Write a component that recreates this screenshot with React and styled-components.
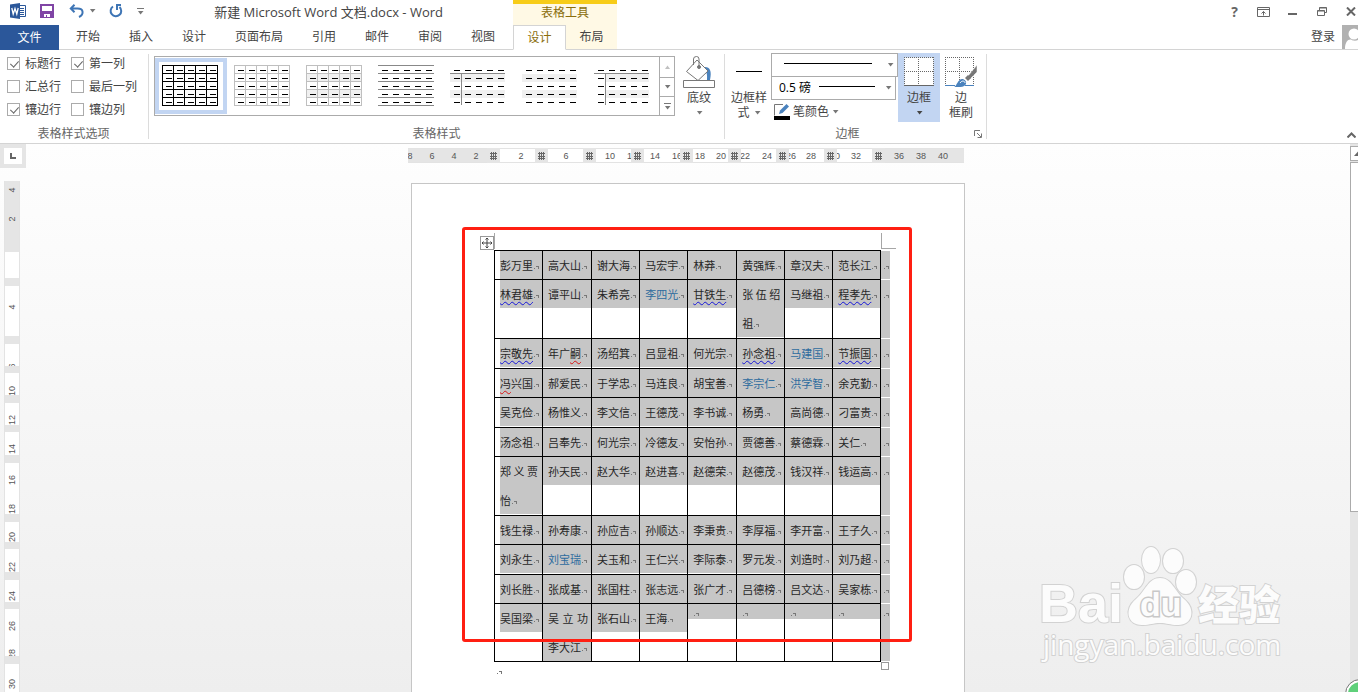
import React from "react";
import styled, { createGlobalStyle, css } from "styled-components";

// styles
const GlobalStyle = createGlobalStyle`
	* {
		box-sizing: border-box;
	}
	body {
		margin: 0;
		overflow: hidden;
		color: #444;
		font: 12px/16px "Open Sans", "Noto Sans CJK SC", sans-serif;
	}
	button, select, input {
		margin: 0;
		padding: 0;
		border: 0;
		background: none;
		color: inherit;
		font: inherit;
	}
	svg {
		display: block;
		flex: none;
	}
`;

const Container = styled.div`
	display: flex;
	flex-direction: column;
	height: 100vh;
	position: relative;
	overflow: hidden;
	background: #fff;
`;

/* header */
const Header = styled.header`
	display: flex;
	height: 50px;
	flex: none;
	border-bottom: 1px solid #d4d4d4;
`;

const HeaderMain = styled.div`
	display: flex;
	flex-direction: column;
`;

const TitleBar = styled.div`
	display: flex;
	align-items: center;
	height: 25px;
	padding: 0 0 3px 10px;
`;

const QuickButton = styled.button`
	display: flex;
	align-items: center;
	margin-right: ${(p) => p.$gap || 0}px;
`;

const Title = styled.h1`
	flex: 1;
	margin: 0;
	padding-top: 1px;
	font-size: 13px;
	font-weight: 400;
	text-align: center;
	white-space: nowrap;
`;

const Tabs = styled.nav`
	display: flex;
	gap: 1px;
	height: 24px;
	padding-right: 4px;
`;

const Tab = styled.button`
	height: 24px;
	padding: 0 14px;
	white-space: nowrap;
`;

const FileTab = styled(Tab)`
	height: 25px;
	width: 59px;
	margin-right: 2px;
	background: #2b579a;
	color: #fff;
`;

const ContextTools = styled.div`
	width: 104px;
	height: 50px;
	border-top: 4px solid #f7cc18;
	background: #fff9e5;
	color: #8a6d0b;
	text-align: center;
`;

const ContextTitle = styled.div`
	height: 21px;
	line-height: 18px;
`;

const ContextTabs = styled.div`
	display: flex;
	height: 25px;
`;

const ContextTab = styled.button`
	flex: 1;
	border-bottom: 1px solid #d4d4d4;
	color: #444;

	${(p) =>
		p.$active &&
		css`
			border: 1px solid #d4d4d4;
			border-bottom-color: #fff;
			background: #fff;
			color: #8a6d0b;
		`}
`;

const HeaderSide = styled.div`
	display: flex;
	flex: 1;
	flex-direction: column;
	align-items: flex-end;
`;

const WindowButtons = styled.div`
	display: flex;
	height: 25px;
	padding-bottom: 2px;
`;

const WindowButton = styled.button`
	display: flex;
	align-items: center;
	justify-content: center;
	width: 29px;
	color: #666;
	font-size: 14px;
	font-weight: 700;

	&:last-child {
		width: 22px;
		padding-left: 8px;
	}
`;

const Account = styled.div`
	display: flex;
	align-items: center;
	gap: 7px;
	height: 24px;
`;

/* ribbon */
const Ribbon = styled.section`
	display: flex;
	height: 94px;
	flex: none;
	border-bottom: 1px solid #d4d4d4;
`;

const Group = styled.div`
	display: flex;
	flex-direction: column;
	padding: ${(p) => p.$pad || "2px 5px 1px"};
`;

const Separator = styled.div`
	width: 1px;
	margin: 4px 0;
	background: #dcdcdc;
`;

const GroupBody = styled.div`
	display: flex;
	flex: 1;
	align-items: flex-start;
`;

const GroupLabel = styled.div`
	display: flex;
	align-items: center;
	height: 16px;
	color: #666;

	span {
		flex: 1;
		text-align: center;
	}
`;

const Options = styled.div`
	display: grid;
	grid-template-columns: 64px 69px;
	grid-auto-rows: 23px;
	align-items: center;
`;

const Option = styled.label`
	display: flex;
	align-items: center;
	gap: 5px;
	white-space: nowrap;
`;

const Checkbox = styled.input`
	appearance: none;
	width: 13px;
	height: 13px;
	border: 1px solid #ababab;
	background: #fff;

	&:checked::after {
		content: "";
		display: block;
		width: 4px;
		height: 7px;
		margin: 1px 0 0 4px;
		border: solid #666;
		border-width: 0 1px 1px 0;
		transform: rotate(42deg);
	}
`;

const Gallery = styled.div`
	display: flex;
	margin-top: 4px;
	height: 60px;
	border: 1px solid #ababab;
`;

const Style = styled.button`
	width: 72px;
	height: 56px;
	margin-top: 1px;
	padding-left: ${(p) => (p.$active ? 3 : 7)}px;
	border: ${(p) => (p.$active ? "4px solid #c2d5f2" : 0)};
`;

const GalleryScroll = styled.div`
	display: grid;
	grid-template-rows: 20px 19px 19px;
	width: 15px;
	border-left: 1px solid #ababab;
`;

const ScrollButton = styled.button`
	display: flex;
	align-items: center;
	justify-content: center;

	& + & {
		border-top: 1px solid #ababab;
	}
`;

const BigButton = styled.button`
	display: flex;
	flex-direction: column;
	align-items: center;
	width: ${(p) => p.$width}px;
	height: 69px;
	margin: 1px 0 0 ${(p) => p.$left || 0}px;
	padding-top: 3px;
	background: ${(p) => (p.$active ? "#c2d5f2" : "none")};
	line-height: 15px;

	svg:first-child {
		margin-bottom: 2px;
	}
`;

const Inline = styled.span`
	display: flex;
	align-items: center;
	gap: 4px;
	height: 15px;

	svg:first-child {
		margin-bottom: 0;
	}
`;

const PenColumn = styled.div`
	display: flex;
	flex-direction: column;
	width: 127px;
	margin: 1px 0 0 2px;
`;

const SelectBox = styled.label`
	position: relative;
	height: 24px;
	width: ${(p) => p.$width}px;
	margin-bottom: -1px;

	svg {
		position: absolute;
		right: 4px;
		top: 10px;
		pointer-events: none;
	}
`;

const Select = styled.select`
	appearance: none;
	width: 100%;
	height: 24px;
	padding-left: 7px;
	border: 1px solid #ababab;
	background: #fff linear-gradient(#000, #000) no-repeat ${(p) => p.$x}px 9px / ${(p) => p.$line}px 1px;
	color: #000;
`;

const PenColor = styled.button`
	display: flex;
	align-items: center;
	gap: 3px;
	height: 23px;
	padding: 2px 0 0 3px;
`;

const CollapseButton = styled.button`
	margin: auto 2px 5px auto;
`;

/* workspace */
const Workspace = styled.main`
	display: grid;
	grid-template: 36px 1fr / 26px 1fr 8px;
	flex: 1;
	min-height: 0;
	background: linear-gradient(#fefefe, #eee);
`;

const TabStop = styled.button`
	display: flex;
	align-items: center;
	justify-content: center;
	width: 26px;
	height: 24px;
	border: 4px solid #e5e5e5;
	background: #fff;
`;

const Ruler = styled.div`
	display: flex;
	justify-self: center;
	width: 556px;
	height: 15px;
	margin: 4px 4px 0 0;
	overflow: hidden;
	color: #555;
	font: 9px/14px "Liberation Sans", sans-serif;
`;

const SideRuler = styled(Ruler)`
	flex-direction: column;
	justify-self: start;
	width: 16px;
	height: auto;
	margin: 1px 0 0 4px;
`;

const Segment = styled.div`
	position: relative;
	flex: none;
	overflow: hidden;
	border: solid #e3e3e3;
	border-width: 1px 0;
	background: ${(p) => (p.$margin ? "#e5e5e5" : "#fff")};

	${SideRuler} & {
		border-width: 0 1px;
	}
`;

const Tick = styled.span`
	position: absolute;
	top: 0;
	transform: translateX(-50%);
`;

const SideTick = styled.span`
	position: absolute;
	left: 0;
	writing-mode: vertical-rl;
	transform: translateY(-50%) rotate(180deg);
`;

const ColumnGrip = styled.div`
	display: flex;
	flex: none;
	align-items: center;
	justify-content: center;
	width: 13px;
	background: #e5e5e5;
`;

const Scrollbar = styled.div`
	grid-column: 3;
	grid-row: 1 / 3;
	display: flex;
	flex-direction: column;
	gap: 1px;
	padding-top: 2px;
	background: #e5e5e5;
	overflow: hidden;
`;

const ScrollArrow = styled.button`
	height: 15px;
	padding-left: 3px;
	border: 1px solid #ababab;
	border-right: 0;
	background: #fff;
`;

const ScrollThumb = styled.div`
	height: 350px;
	border: 1px solid #ababab;
	border-right: 0;
	background: #fff;
`;

const Page = styled.article`
	justify-self: center;
	width: 554px;
	min-height: 780px;
	margin-top: 3px;
	padding: 66px 0 0 82px;
	border: 1px solid #c6c6c6;
	background: #fff;
`;

const Sheet = styled.div`
	position: relative;
	width: max-content;
`;

const Names = styled.table`
	table-layout: fixed;
	width: 396px;
	border-collapse: collapse;
	color: #262626;
	font: 11px/28px "Noto Sans CJK SC", sans-serif;
`;

const Row = styled.tr`
	height: ${(p) => p.$height}px;
`;

const Cell = styled.td`
	padding: 0;
	border: 1px solid #000;
	vertical-align: top;

	&:first-child {
		padding-left: 5px;
	}
	&:first-child > div {
		padding-left: 0;
	}
`;

const EndCell = styled.td`
	padding: 0 0 0 2px;
	border: 1px solid #fff;
	border-left-color: #000;
	border-right: 0;
	background: #c6c6c6;
	vertical-align: top;
`;

const Selected = styled.div`
	display: grid;
	gap: 1px;
	padding-left: 5px;
	background: #c6c6c6;
	white-space: nowrap;
`;

const Line = styled.div`
	display: flex;
	align-items: center;
	height: ${(p) => (p.$empty ? 15 : 28)}px;
	padding-right: 4px;
	justify-content: ${(p) => (p.$spread ? "space-between" : "flex-start")};
`;

const Name = styled.span`
	color: ${(p) => (p.$link ? "#2e6c9e" : "inherit")};
`;

const Wavy = styled.span`
	text-decoration: underline wavy ${(p) => p.color} 1px;
	text-decoration-skip-ink: none;
	text-underline-offset: 2px;
`;

const MoveHandle = styled.button`
	position: absolute;
	left: -14px;
	top: -14px;
	width: 14px;
	height: 14px;
	border: 1px solid #999;
	background: #fff;
`;

const CropMark = styled.span`
	position: absolute;
	top: -17px;
	left: ${(p) => p.$left}px;
	width: 15px;
	height: 16px;
	border-left: 1px solid #a6a6a6;
	border-bottom: ${(p) => (p.$foot ? "1px solid #a6a6a6" : 0)};
`;

const ResizeHandle = styled.span`
	position: absolute;
	left: 387px;
	bottom: -8px;
	width: 8px;
	height: 8px;
	border: 1px solid #999;
	background: #fff;
`;

const Highlight = styled.div`
	position: absolute;
	left: -32px;
	top: -23px;
	width: 450px;
	height: 415px;
	border: 3px solid #ff1f12;
	border-radius: 3px;
	pointer-events: none;
`;

const EndMark = styled.div`
	padding: 3px 0 0 2px;
`;

const Watermark = styled.svg`
	position: absolute;
	right: 68px;
	bottom: 20px;
	pointer-events: none;
`;

const Badge = styled.span`
	position: absolute;
	right: -16px;
	bottom: -16px;
	width: 28px;
	height: 28px;
	border: 2px solid #fff;
	border-radius: 50%;
	outline: 1px solid #777;
	background: #5fd07a;
`;

// data
const TABS = ["开始", "插入", "设计", "页面布局", "引用", "邮件", "审阅", "视图"];

const OPTIONS = [
	["标题行", true],
	["第一列", true],
	["汇总行", false],
	["最后一列", false],
	["镶边行", true],
	["镶边列", false],
];

const STYLES = [
	{ grid: "#000" },
	{ grid: "#bfbfbf" },
	{ grid: "#bfbfbf", bands: true },
	{ lines: true },
	{ bands: true, head: true },
	{ bands: true },
	{ bands: true, head: true, inset: 11 },
];

// null marks a column grip, the rest are [width, ticks]
const TOP_RULER = [
	[79, [[2, "8"], [24, "6"], [46, "4"], [68, "2"]], true],
	null,
	[35, [[21, "2"]]],
	null,
	[35, [[18, "6"]]],
	null,
	[35, [[14, "10"], [36, "12"]]],
	null,
	[36, [[11, "14"], [33, "16"]]],
	null,
	[35, [[7, "18"], [28, "20"]]],
	null,
	[35, [[4, "22"], [26, "24"]]],
	null,
	[35, [[2, "26"], [22, "28"]]],
	null,
	[35, [[-2, "30"], [19, "32"]]],
	null,
	[79, [[14, "36"], [36, "38"], [58, "40"]], true],
];

const SIDE_RULER = [
	[71, [[9, "4"], [38, "2"]], true],
	[26, []],
	[8, [], true],
	[50, [[21, "4"]]],
	[8, [], true],
	[22, [[22, "6"]]],
	[7, [], true],
	[22, [[18, "10"]]],
	[8, [], true],
	[22, [[17, "12"]]],
	[7, [], true],
	[23, [[17, "14"]]],
	[8, [], true],
	[51, [[17, "16"], [46, "18"]]],
	[8, [], true],
	[20, [[15, "20"]]],
	[7, [], true],
	[23, [[18, "22"]]],
	[8, [], true],
	[22, [[16, "24"]]],
	[7, [], true],
	[47, [[17, "26"], [45, "28"]]],
	[8, [], true],
	[40, [[20, "30"]]],
];

const COLUMNS = [48, 49, 48, 48, 49, 48, 48, 48, 9];

const LINKS = ["李四光", "马建国", "李宗仁", "洪学智", "刘宝瑞"];
const GRAMMAR = ["林君雄", "甘铁生", "程孝先", "宗敬先", "孙念祖", "节振国"];

const ROWS = [
	[29, "彭万里 高大山 谢大海 马宏宇 林莽 黄强辉 章汉夫 范长江"],
	[59, "林君雄 谭平山 朱希亮 李四光 甘铁生 张伍绍/祖 马继祖 程孝先"],
	[30, "宗敬先 年广嗣 汤绍箕 吕显祖 何光宗 孙念祖 马建国 节振国"],
	[29, "冯兴国 郝爱民 于学忠 马连良 胡宝善 李宗仁 洪学智 余克勤"],
	[30, "吴克俭 杨惟义 李文信 王德茂 李书诚 杨勇 高尚德 刁富贵"],
	[29, "汤念祖 吕奉先 何光宗 冷德友 安怡孙 贾德善 蔡德霖 关仁"],
	[59, "郑义贾/怡 孙天民 赵大华 赵进喜 赵德荣 赵德茂 钱汉祥 钱运高"],
	[29, "钱生禄 孙寿康 孙应吉 孙顺达 李秉贵 李厚福 李开富 王子久"],
	[30, "刘永生 刘宝瑞 关玉和 王仁兴 李际泰 罗元发 刘造时 刘乃超"],
	[29, "刘长胜 张成基 张国柱 张志远 张广才 吕德榜 吕文达 吴家栋"],
	[58, "吴国梁 吴立功/李大江 张石山 王海 - - - -"],
];

// small parts
function Arrow({ up, color = "#777", bar }) {
	return (
		<svg width='7' height={bar ? 7 : 4} viewBox={bar ? "0 -3 7 7" : "0 0 7 4"} fill={color}>
			{bar && <path d='M0-3h7v1H0z' />}
			<path d={up ? "M1 4h5L3.500.5z" : "M1 0h5.500L3.500 3.500z"} />
		</svg>
	);
}

const Mark = styled.svg`
	margin: 4px 0 0 1px;
`;

function ParagraphMark() {
	return (
		<Mark width='6' height='6' viewBox='0 0 6 6' fill='#777' shapeRendering='crispEdges'>
			<path d='M0 4h1v1H0zM2 2h3v3H4V3H2z' />
		</Mark>
	);
}

function StyleThumb({ grid, bands, lines, head, inset = 0 }) {
	const steps = [0, 1, 2, 3, 4, 5];
	const cells = [0, 1, 2, 3, 4];
	return (
		<svg width='56' height='42' viewBox='0 0 56 42' shapeRendering='crispEdges'>
			{bands && <path d={`M${inset} 9h${55 - inset}v8H${inset}zM${inset} 25h${55 - inset}v8H${inset}z`} fill='#f0f0f0' />}
			{(grid || lines) && steps.map((s) => <path key={s} d={`M0 ${s * 8 + 0.5}h56`} stroke={grid || "#888"} />)}
			{grid && steps.map((s) => <path key={s} d={`M${s * 11 + 0.5} 0v41`} stroke={grid} />)}
			{head && <path d='M0 8.500h55M11.500 8v32' stroke='#888' fill='none' />}
			{cells.map((r) => cells.map((c) => <path key={`${r}${c}`} d={`M${c * 11 + 4} ${r * 8 + 5.5}h6`} stroke='#000' />))}
		</svg>
	);
}

function Ticks({ ticks, side }) {
	return ticks.map(([at, text]) =>
		side ? (
			<SideTick key={at} style={{ top: at }}>{text}</SideTick>
		) : (
			<Tick key={at} style={{ left: at }}>{text}</Tick>
		)
	);
}

function NameText({ text }) {
	if (GRAMMAR.includes(text)) return <Wavy color='#1515d8'>{text}</Wavy>;
	if (text === "年广嗣") return <Name>年广<Wavy color='#d81515'>嗣</Wavy></Name>;
	if (text === "冯兴国") return <Name><Wavy color='#d81515'>冯</Wavy>兴国</Name>;
	return <Name $link={LINKS.includes(text)}>{text}</Name>;
}

function NameCell({ value }) {
	if (value === "-") {
		return (
			<Cell>
				<Selected>
					<Line $empty><ParagraphMark /></Line>
				</Selected>
			</Cell>
		);
	}
	const lines = value.split("/");
	return (
		<Cell>
			<Selected>
				{lines.map((line, i) =>
					i < lines.length - 1 ? (
						<Line key={line} $spread>
							{line.split("").map((char) => <span key={char}>{char}</span>)}
						</Line>
					) : (
						<Line key={line}>
							<NameText text={line} />
							<ParagraphMark />
						</Line>
					)
				)}
			</Selected>
		</Cell>
	);
}

function TopBar() {
	return (
		<Header>
			<HeaderMain>
				<TitleBar>
					<QuickButton $gap={14} aria-label='Word'>
						<svg width='16' height='16' viewBox='0 0 16 16'>
							<path d='M8 2.500h7.500v11H8' fill='#fff' stroke='#2b579a' />
							<path d='M10 5.500h4M10 7.500h4M10 9.500h4M10 11.500h4' stroke='#2b579a' />
							<path d='M0 1.500L10 0v16L0 14.500z' fill='#2b579a' />
							<path d='M1.800 5l1.400 6L5 5.500 6.800 11 8.200 5' fill='none' stroke='#fff' strokeWidth='1.300' />
						</svg>
					</QuickButton>
					<QuickButton $gap={15} aria-label='保存'>
						<svg width='14' height='14' viewBox='0 0 14 14'>
							<path d='M1 1h12v12H1z' fill='#fff' stroke='#8045a5' strokeWidth='2' />
							<path d='M1 7h12v7H1z' fill='#8045a5' />
							<path d='M4 10h6v3H7v-2H6v2H4z' fill='#fff' />
						</svg>
					</QuickButton>
					<QuickButton $gap={5} aria-label='撤消'>
						<svg width='15' height='14' viewBox='0 0 15 14' fill='none' stroke='#3e75b5' strokeWidth='2'>
							<path d='M5.500.8L1.800 4.500l3.700 3.700M2 4.500h6.500c6.500 0 6.500 6 1.500 8.500' />
						</svg>
					</QuickButton>
					<QuickButton $gap={13} aria-label='撤消列表'><Arrow /></QuickButton>
					<QuickButton $gap={14} aria-label='重复'>
						<svg width='14' height='14' viewBox='0 0 14 14' fill='none' stroke='#3e75b5' strokeWidth='2'>
							<path d='M4 2.500A5.300 5.300 0 1 0 10.500 3M7 1h5M8 1v5' />
						</svg>
					</QuickButton>
					<QuickButton aria-label='自定义'><Arrow bar /></QuickButton>
					<Title>新建 Microsoft Word 文档.docx - Word</Title>
				</TitleBar>
				<Tabs>
					<FileTab>文件</FileTab>
					{TABS.map((tab) => <Tab key={tab}>{tab}</Tab>)}
				</Tabs>
			</HeaderMain>
			<ContextTools>
				<ContextTitle>表格工具</ContextTitle>
				<ContextTabs>
					<ContextTab $active>设计</ContextTab>
					<ContextTab>布局</ContextTab>
				</ContextTabs>
			</ContextTools>
			<HeaderSide>
				<WindowButtons>
					<WindowButton aria-label='帮助'>?</WindowButton>
					<WindowButton aria-label='功能区显示选项'>
						<svg width='13' height='10' viewBox='0 0 13 10' fill='none' stroke='#666'>
							<path d='M.5.5h12v9H.500zM.5 2.500h12M6.500 8.500V4.500M4.500 6.500l2-2 2 2' />
						</svg>
					</WindowButton>
					<WindowButton aria-label='最小化'>
						<svg width='9' height='6' viewBox='0 0 9 6'><path d='M0 4h9v2H0z' fill='#666' /></svg>
					</WindowButton>
					<WindowButton aria-label='还原'>
						<svg width='10' height='9' viewBox='0 0 10 9' fill='none' stroke='#666'>
							<path d='M.5 3.500h7v5H.500zM.5 4h7M2.500 3V.5h7v5H8M2.500 1h7' />
						</svg>
					</WindowButton>
					<WindowButton aria-label='关闭'>
						<svg width='10' height='9' viewBox='0 0 10 9' stroke='#666' strokeWidth='2'>
							<path d='M1 .5l8 8M9 .5l-8 8' />
						</svg>
					</WindowButton>
				</WindowButtons>
				<Account>
					<button>登录</button>
					<svg width='16' height='24' viewBox='0 0 16 24'>
						<path d='M0 0h16v24H0z' fill='#b1b1b1' />
						<circle cx='12' cy='9' r='5.500' fill='#fff' />
						<path d='M3 24c0-7 3-10 6-9.500 2 1.500 5 1.500 7 .5v9z' fill='#fff' />
					</svg>
				</Account>
			</HeaderSide>
		</Header>
	);
}

function Toolbar() {
	return (
		<Ribbon>
			<Group $pad='2px 8px 1px 7px'>
				<GroupBody>
					<Options>
						{OPTIONS.map(([label, checked]) => (
							<Option key={label}>
								<Checkbox type='checkbox' defaultChecked={checked} />
								{label}
							</Option>
						))}
					</Options>
				</GroupBody>
				<GroupLabel><span>表格样式选项</span></GroupLabel>
			</Group>
			<Separator />
			<Group>
				<GroupBody>
					<Gallery>
						{STYLES.map((style, i) => (
							<Style key={i} $active={i === 0} aria-label={`表格样式 ${i + 1}`}>
								<StyleThumb {...style} />
							</Style>
						))}
						<GalleryScroll>
							<ScrollButton aria-label='向上'><Arrow up color='#c0c0c0' /></ScrollButton>
							<ScrollButton aria-label='向下'><Arrow /></ScrollButton>
							<ScrollButton aria-label='其他'><Arrow bar /></ScrollButton>
						</GalleryScroll>
					</Gallery>
					<BigButton $width={40} $left={4}>
						<svg width='32' height='32' viewBox='0 0 32 32' fill='none' stroke='#777'>
							<path d='M22 11c5 0 7 4 5 13l-3 1c0-5 1-9-4-12z' fill='#4a82bd' stroke='none' />
							<path d='M3.500 15.500L14 4l11 11-10 9.500z' fill='#fff' />
							<path d='M10.500 9V3q0-2.500 3-2.500 2.500 0 2.500 2.500v7' />
							<circle cx='16' cy='11' r='1.500' fill='#777' />
							<path d='M.5 24.500h31v7H.500z' fill='#fff' />
						</svg>
						底纹
						<Inline><Arrow /></Inline>
					</BigButton>
				</GroupBody>
				<GroupLabel><span>表格样式</span></GroupLabel>
			</Group>
			<Separator />
			<Group $pad='2px 4px 1px'>
				<GroupBody>
					<BigButton $width={40}>
						<svg width='26' height='32' viewBox='0 0 26 32'><path d='M0 15h26v1H0z' fill='#000' /></svg>
						边框样
						<Inline>式<Arrow /></Inline>
					</BigButton>
					<PenColumn>
						<SelectBox $width={127}>
							<Select aria-label='笔样式' $x={12} $line={88}><option aria-label='实线' /></Select>
							<Arrow />
						</SelectBox>
						<SelectBox $width={125}>
							<Select aria-label='笔划粗细' $x={47} $line={56}><option>0.5 磅</option></Select>
							<Arrow />
						</SelectBox>
						<PenColor>
							<svg width='16' height='16' viewBox='0 0 16 16'>
								<path d='M9 .5H.5v11' fill='none' stroke='#777' />
								<path d='M5 10l1-3.500L12.500 0 15 2.500 8.500 9z' fill='#4a82bd' />
								<path d='M0 12h16v4H0z' />
							</svg>
							笔颜色
							<Arrow />
						</PenColor>
					</PenColumn>
					<BigButton $width={42} $active>
						<svg width='30' height='32' viewBox='0 0 30 32' fill='none' stroke='#666'>
							<path d='M.5 1.500h29v28H.500z' fill='#fff' stroke='none' />
							<path d='M0 1.500h30M0 15.500h30M.5 1v28M14.500 1v28M29.500 1v28' strokeDasharray='1 1' />
							<path d='M0 29.500h30' />
						</svg>
						边框
						<Inline><Arrow color='#444' /></Inline>
					</BigButton>
					<BigButton $width={42}>
						<svg width='32' height='32' viewBox='0 0 32 32' fill='none' stroke='#666'>
							<path d='M0 1.500h29M0 15.500h29M.5 1v28M14.500 1v28M28.500 1v28' strokeDasharray='1 1' />
							<path d='M0 29.500h10M20 29.500h9' stroke='#4a82bd' />
							<path d='M32 9l-9 11 2 3 7-7z' fill='#777' stroke='#fff' strokeWidth='.5' />
							<path d='M20 22l3-3 3 3-3 3z' fill='#777' stroke='none' />
							<path d='M9 31c3-1 4-9 9-8 5 2 4 8-3 8z' fill='#4a82bd' stroke='none' />
							<path d='M15 27c2-3 5-2 5 0' stroke='#fff' />
						</svg>
						<span>边</span>
						<span>框刷</span>
					</BigButton>
				</GroupBody>
				<GroupLabel>
					<span>边框</span>
					<button aria-label='边框和底纹'>
						<svg width='16' height='8' viewBox='-8 0 16 8' fill='none' stroke='#777'>
							<path d='M.5 6V.5H6M3 3l4 4M7.500 3.500v4h-4' />
						</svg>
					</button>
				</GroupLabel>
			</Group>
			<Separator />
			<CollapseButton aria-label='折叠功能区'>
				<svg width='9' height='6' viewBox='0 0 9 6' fill='none' stroke='#666' strokeWidth='2'>
					<path d='M.5 5.500l4-4 4 4' />
				</svg>
			</CollapseButton>
		</Ribbon>
	);
}

function NameTable() {
	return (
		<Sheet>
			<Names>
				<colgroup>
					{COLUMNS.map((width, i) => <col key={i} style={{ width }} />)}
				</colgroup>
				<tbody>
					{ROWS.map(([height, names]) => (
						<Row key={names} $height={height}>
							{names.split(" ").map((name, i) => <NameCell key={i} value={name} />)}
							<EndCell>
								<Line $empty={names.endsWith("-")}><ParagraphMark /></Line>
							</EndCell>
						</Row>
					))}
				</tbody>
			</Names>
			<CropMark $left={0} />
			<CropMark $left={387} $foot />
			<MoveHandle aria-label='移动表格'>
				<svg width='12' height='12' viewBox='0 0 12 12' stroke='#444' fill='none'>
					<path d='M6 1v10M1 6h10M4.500 2.500L6 1l1.500 1.500M4.500 9.500L6 11l1.500-1.500M2.500 4.500L1 6l1.500 1.500M9.500 4.500L11 6 9.500 7.500' />
				</svg>
			</MoveHandle>
			<ResizeHandle />
			<Highlight />
		</Sheet>
	);
}

export default function App() {
	return (
		<Container>
			<GlobalStyle />
			<TopBar />
			<Toolbar />
			<Workspace>
				<TabStop aria-label='制表符'>
					<svg width='6' height='6' viewBox='0 0 6 6'><path d='M0 0h2v4h4v2H0z' fill='#666' /></svg>
				</TabStop>
				<Ruler>
					{TOP_RULER.map((part, i) =>
						part ? (
							<Segment key={i} $margin={part[2]} style={{ width: part[0] }}>
								<Ticks ticks={part[1]} />
							</Segment>
						) : (
							<ColumnGrip key={i}>
								<svg width='7' height='8' viewBox='0 0 7 8' stroke='#666' shapeRendering='crispEdges'>
									<path d='M1.500 0v8M3.500 0v8M5.500 0v8M0 1.500h7M0 4.500h7M0 6.500h7' />
								</svg>
							</ColumnGrip>
						)
					)}
				</Ruler>
				<Scrollbar>
					<ScrollArrow aria-label='向上滚动'>
						<svg width='9' height='5' viewBox='0 0 9 5'><path d='M0 5l4.500-5L9 5z' fill='#666' /></svg>
					</ScrollArrow>
					<ScrollThumb />
				</Scrollbar>
				<SideRuler>
					{SIDE_RULER.map(([height, ticks, margin], i) => (
						<Segment key={i} $margin={margin} style={{ height }}>
							<Ticks ticks={ticks} side />
						</Segment>
					))}
				</SideRuler>
				<Page>
					<NameTable />
					<EndMark><ParagraphMark /></EndMark>
				</Page>
			</Workspace>
			<Watermark width='260' height='130' viewBox='0 0 260 130' fill='#fcfcfc' stroke='#d2d2d2' strokeWidth='2' paintOrder='stroke'>
				<ellipse cx='104' cy='35' rx='10' ry='12' />
				<ellipse cx='121' cy='18' rx='9' ry='13' />
				<ellipse cx='143' cy='19' rx='10' ry='12' />
				<ellipse cx='156' cy='40' rx='10' ry='12' />
				<path d='M130 36c12 0 15 14 24 21 13 11 8 27-7 26-7 0-10-2-17-2s-10 2-17 2c-15 1-20-15-7-26 9-7 12-21 24-21z' />
				<text x='9' y='80' fontFamily='Liberation Sans' fontSize='54' fontWeight='700'>Bai</text>
				<text x='110' y='74' fontFamily='Liberation Sans' fontSize='34' fontWeight='700' strokeWidth='3' stroke='#c8c8c8'>du</text>
				<text x='168' y='78' fontFamily='Noto Sans CJK SC' fontSize='41' fontWeight='900'>经验</text>
				<text x='13' y='113' fontFamily='Open Sans' fontSize='28'>jingyan.baidu.com</text>
			</Watermark>
			<Badge />
		</Container>
	);
}
